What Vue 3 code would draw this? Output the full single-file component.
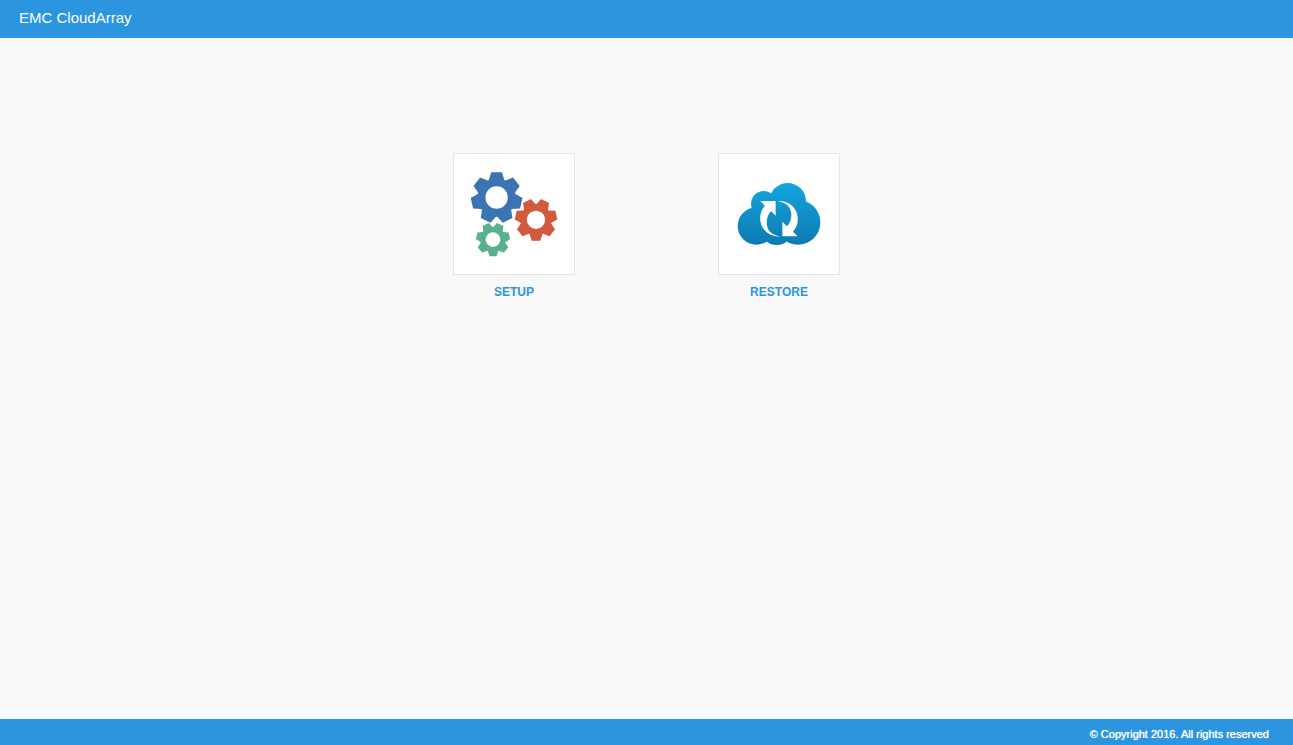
<script setup>
const TEETH = 7

// Outline of a cog whose first tooth points towards `start` degrees.
function cog(cx, cy, radius, start) {
  const point = (r, deg) => {
    const a = (deg * Math.PI) / 180
    return `${(cx + r * Math.cos(a)).toFixed(2)} ${(cy + r * Math.sin(a)).toFixed(2)}`
  }
  const step = 360 / TEETH
  const points = []
  for (let i = 0; i < TEETH; i++) {
    const a = start + i * step
    points.push(point(radius, a - 12), point(radius, a + 12))
    points.push(point(radius * 0.74, a + step / 2 - 2), point(radius * 0.74, a + step / 2 + 2))
  }
  const h = radius * 0.43
  return `M${points.join('L')}ZM${cx - h} ${cy}a${h} ${h} 0 1 0 ${2 * h} 0a${h} ${h} 0 1 0 ${-2 * h} 0Z`
}

const cogs = [
  { color: '#3b74b3', path: cog(42.6, 43.5, 25.9, -90) },
  { color: '#d15a3d', path: cog(82, 65.8, 21.3, 90) },
  { color: '#58b08c', path: cog(39, 85.6, 17.1, 90) }
]

const arrow =
  'M124 141H170V185L156 171C144 185 139 205 147 224C154 238 167 244 185 247C158 249 138 236 129 217C119 196 123 171 138 155Z'
</script>

<template>
  <div class="page">
    <header class="topbar">
      <h1>EMC CloudArray</h1>
    </header>

    <main class="choices">
      <a class="choice" href="#setup">
        <span class="tile">
          <svg viewBox="0 0 120 120" aria-hidden="true">
            <path v-for="c in cogs" :key="c.color" :d="c.path" :fill="c.color" fill-rule="evenodd" />
          </svg>
        </span>
        <span class="label">SETUP</span>
      </a>
      <a class="choice" href="#restore">
        <span class="tile">
          <svg viewBox="0 0 360 360" aria-hidden="true">
            <defs>
              <linearGradient id="sky" gradientUnits="userSpaceOnUse" x1="0" y1="87" x2="0" y2="273">
                <stop offset="0" stop-color="#14a5df" />
                <stop offset="1" stop-color="#0b7bb0" />
              </linearGradient>
            </defs>
            <g fill="url(#sky)">
              <circle cx="112" cy="216" r="56" />
              <circle cx="134" cy="149" r="38" />
              <circle cx="206" cy="142" r="55" />
              <circle cx="237" cy="205" r="67" />
              <circle cx="173" cy="226" r="47" />
              <rect x="120" y="150" width="100" height="90" />
            </g>
            <g fill="#fff">
              <path :d="arrow" />
              <path :d="arrow" transform="rotate(180 180 194)" />
            </g>
          </svg>
        </span>
        <span class="label">RESTORE</span>
      </a>
    </main>

    <footer class="bottombar">© Copyright 2016. All rights reserved</footer>
  </div>
</template>

<style>
body {
  margin: 0;
  background: #f9f9f9;
}
</style>

<style scoped>
.page {
  display: flex;
  flex-direction: column;
  min-height: 100vh;
  font-family: "Liberation Sans", Arial, sans-serif;
}
.topbar {
  padding: 8px 19px 10px;
  background: #2c95df;
  color: #fff;
}
h1 {
  margin: 0;
  font-size: 15px;
  line-height: 20px;
  font-weight: 400;
}
.choices {
  flex: 1;
  display: flex;
  justify-content: center;
  align-items: flex-start;
  gap: 143px;
  padding-top: 115px;
}
.choice {
  display: flex;
  flex-direction: column;
  align-items: center;
  gap: 9px;
  color: #2c95df;
  text-decoration: none;
}
.tile {
  border: 1px solid #e4e4e4;
  background: #fff;
}
.tile svg {
  display: block;
  width: 120px;
  height: 120px;
}
.label {
  font-size: 12px;
  line-height: 16px;
  font-weight: 700;
}
.bottombar {
  padding: 7px 24px 3px;
  background: #2c95df;
  color: #fff;
  font-size: 11px;
  line-height: 16px;
  text-align: right;
  text-shadow: 0 0 1px #fff;
}
</style>
